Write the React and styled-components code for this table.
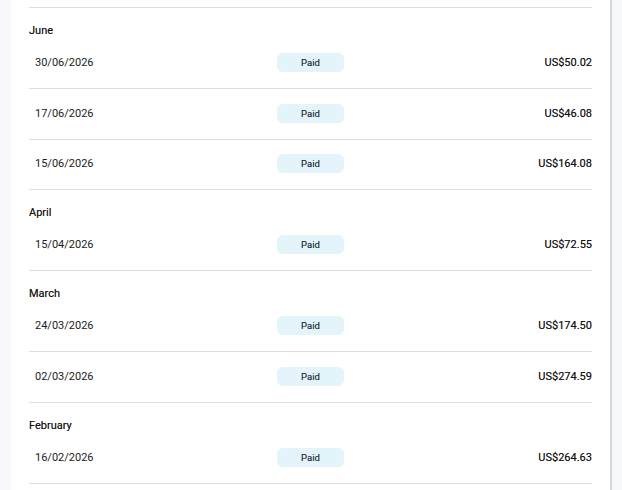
import React from 'react';
import styled, { createGlobalStyle } from 'styled-components';

const GlobalStyle = createGlobalStyle`
  html, body {
    margin: 0;
    padding: 0;
    background: #f7f8fa;
    font-family: Roboto, 'Liberation Sans', sans-serif;
  }
`;

const Page = styled.div`
  display: flex;
  height: 490px;
  overflow: hidden;
  padding-left: 11px;
`;

const Panel = styled.div`
  width: 563px;
  padding: 0 18px;
  background: #ffffff;
  border-right: 2px solid #d6d6d6;
  height: 100%;
`;

const List = styled.div`
  border-top: 1px solid #e0e0e0;
  margin-top: 7px;
`;

const MonthHeader = styled.div`
  height: 30.5px;
  box-sizing: border-box;
  padding-top: 16px;
  font-size: 11px;
  line-height: 14px;
  color: #111111;
  text-shadow: 0 0 0.4px rgba(0, 0, 0, 0.5);
`;

const Row = styled.div`
  display: grid;
  grid-template-columns: 1fr auto 1fr;
  align-items: center;
  height: 50.5px;
  box-sizing: border-box;
  border-bottom: 1px solid #e0e0e0;
  padding-bottom: 1px;
  font-size: 11px;
  color: #222222;
`;

const DateCell = styled.span`
  padding-left: 6px;
`;

const Badge = styled.span`
  width: 67px;
  height: 19px;
  border-radius: 6px;
  background: #e3f4fa;
  color: #1b2a38;
  font-size: 9.5px;
  display: flex;
  align-items: center;
  justify-content: center;
  text-shadow: 0 0 0.3px rgba(0, 0, 0, 0.4);
`;

const Amount = styled.span`
  text-align: right;
  color: #111111;
  text-shadow: 0 0 0.3px rgba(0, 0, 0, 0.5);
`;

const groups = [
  {
    month: 'June',
    items: [
      ['30/06/2026', 'US$50.02'],
      ['17/06/2026', 'US$46.08'],
      ['15/06/2026', 'US$164.08'],
    ],
  },
  { month: 'April', items: [['15/04/2026', 'US$72.55']] },
  {
    month: 'March',
    items: [
      ['24/03/2026', 'US$174.50'],
      ['02/03/2026', 'US$274.59'],
    ],
  },
  { month: 'February', items: [['16/02/2026', 'US$264.63']] },
];

export default function App() {
  return (
    <>
      <GlobalStyle />
      <Page>
        <Panel>
          <List>
            {groups.map((g) => (
              <React.Fragment key={g.month}>
                <MonthHeader>{g.month}</MonthHeader>
                {g.items.map(([date, amount]) => (
                  <Row key={date}>
                    <DateCell>{date}</DateCell>
                    <Badge>Paid</Badge>
                    <Amount>{amount}</Amount>
                  </Row>
                ))}
              </React.Fragment>
            ))}
          </List>
        </Panel>
      </Page>
    </>
  );
}
